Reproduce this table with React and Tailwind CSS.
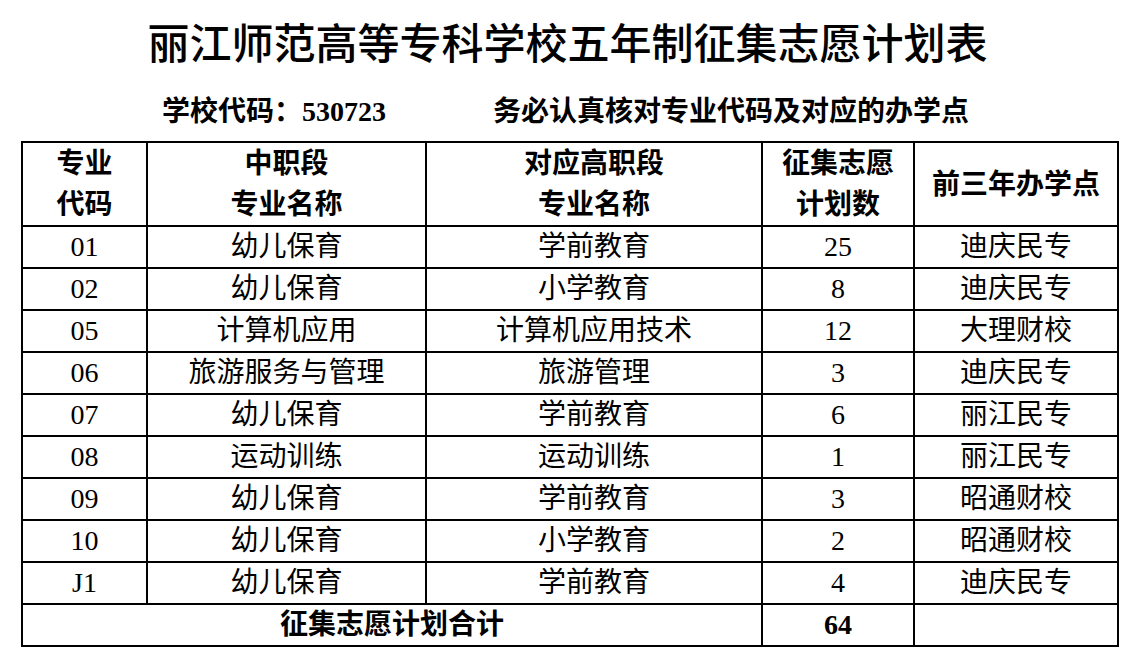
const rows = [
  ["01", "幼儿保育", "学前教育", "25", "迪庆民专"],
  ["02", "幼儿保育", "小学教育", "8", "迪庆民专"],
  ["05", "计算机应用", "计算机应用技术", "12", "大理财校"],
  ["06", "旅游服务与管理", "旅游管理", "3", "迪庆民专"],
  ["07", "幼儿保育", "学前教育", "6", "丽江民专"],
  ["08", "运动训练", "运动训练", "1", "丽江民专"],
  ["09", "幼儿保育", "学前教育", "3", "昭通财校"],
  ["10", "幼儿保育", "小学教育", "2", "昭通财校"],
  ["J1", "幼儿保育", "学前教育", "4", "迪庆民专"],
];

const serif = "font-['Liberation_Serif','Noto_Sans_CJK_SC',serif]";

const App = () => {
  return (
    <div className={`w-[1135px] h-[651px] bg-white text-black ${serif}`}>
      <h1 className="pt-[20px] text-center text-[42px] leading-[50px] font-medium">
        丽江师范高等专科学校五年制征集志愿计划表
      </h1>
      <div className="mt-[26px] flex pl-[162px] text-[28px] leading-[32px] font-bold">
        <span className="w-[331px]">学校代码：530723</span>
        <span>务必认真核对专业代码及对应的办学点</span>
      </div>
      <table className="mt-[13px] ml-[21px] w-[1098px] table-fixed border-collapse text-[28px]">
        <colgroup>
          <col className="w-[125px]" />
          <col className="w-[279px]" />
          <col className="w-[336px]" />
          <col className="w-[152px]" />
          <col className="w-[204px]" />
        </colgroup>
        <thead>
          <tr className="h-[82px] font-bold leading-[41px]">
            <th className="border-2 border-black">
              专业
              <br />
              代码
            </th>
            <th className="border-2 border-black">
              中职段
              <br />
              专业名称
            </th>
            <th className="border-2 border-black">
              对应高职段
              <br />
              专业名称
            </th>
            <th className="border-2 border-black">
              征集志愿
              <br />
              计划数
            </th>
            <th className="border-2 border-black">前三年办学点</th>
          </tr>
        </thead>
        <tbody>
          {rows.map((r) => (
            <tr key={r[0]} className="h-[42px] leading-[38px]">
              {r.map((c, i) => (
                <td key={i} className="border-2 border-black p-0 text-center">
                  {c}
                </td>
              ))}
            </tr>
          ))}
          <tr className="h-[42px] leading-[38px] font-bold">
            <td colSpan={3} className="border-2 border-black text-center">
              征集志愿计划合计
            </td>
            <td className="border-2 border-black text-center">64</td>
            <td className="border-2 border-black"></td>
          </tr>
        </tbody>
      </table>
    </div>
  );
};

export default App;
